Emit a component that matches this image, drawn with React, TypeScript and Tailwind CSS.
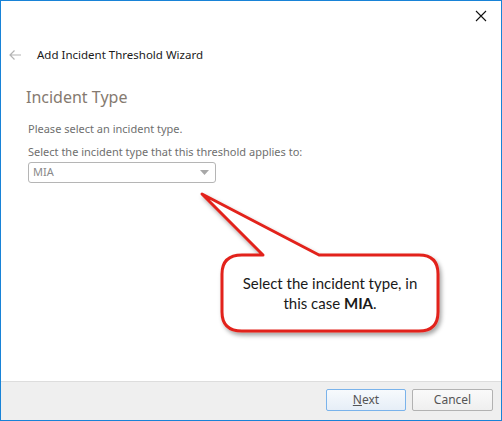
function Callout() {
  // speech bubble drawn over the dialog, pointing at the select box
  const d =
    "M241 254 L262 254 L201 193 L318 254 L418 254 Q437 254 437 273 L437 311 Q437 330 418 330 L241 330 Q221 330 221 311 L221 273 Q221 254 241 254 Z";
  return (
    <div className="absolute inset-0 pointer-events-none">
      <svg width="502" height="421" className="absolute inset-0">
        <defs>
          <filter id="sh" x="-20%" y="-20%" width="140%" height="160%">
            <feDropShadow dx="2" dy="3" stdDeviation="2" floodColor="#000" floodOpacity="0.35" />
          </filter>
        </defs>
        <path d={d} fill="#fff" stroke="#e2231a" strokeWidth="3" strokeLinejoin="round" filter="url(#sh)" />
      </svg>
      <div
        className="absolute left-[221px] top-[272px] w-[216px] text-center text-[15px] leading-[20px] text-[#1a1a1a]"
        style={{ fontFamily: "Lato, 'Open Sans', sans-serif" }}
      >
        Select the incident type, in
        <br />
        this case <b>MIA</b>.
      </div>
    </div>
  );
}

export default function App() {
  return (
    <div
      className="relative w-[502px] h-[421px] border border-[#1883d7] bg-white flex flex-col"
      style={{ fontFamily: "'Noto Sans', 'Open Sans', sans-serif" }}
    >
      {/* Title bar */}
      <div className="h-[43px] flex justify-end items-start pr-[14px] pt-[9px]">
        <svg width="12" height="12" viewBox="0 0 12 12">
          <path d="M1 1 L11 11 M11 1 L1 11" stroke="#111" strokeWidth="1.1" />
        </svg>
      </div>

      {/* Header */}
      <div className="h-[22px] flex items-center">
        <svg width="14" height="12" viewBox="0 0 14 12" className="ml-[7px]">
          <path d="M13 6 H2 M6.5 1.5 L2 6 L6.5 10.5" stroke="#b3b3b3" strokeWidth="1.2" fill="none" />
        </svg>
        <span className="ml-[15px] text-[11.5px] text-[#1a1a1a]">Add Incident Threshold Wizard</span>
      </div>

      {/* Body */}
      <div className="flex-1 pl-[25px] pt-[20px]">
        <div className="text-[16px] leading-[22px] text-[#857a70]">Incident Type</div>
        <div className="mt-[13px] text-[11px] leading-[16px] text-[#6f6f6f] pl-[2px]">Please select an incident type.</div>
        <div className="mt-[7px] text-[11px] leading-[16px] text-[#6f6f6f] pl-[2px]">
          Select the incident type that this threshold applies to:
        </div>
        <div className="mt-[2px] ml-[2px] w-[188px] h-[21px] border border-[#b5b5b5] rounded-[3px] flex items-center justify-between pl-[4px] pr-[6px]">
          <span className="text-[11px] text-[#8a8a8a]">MIA</span>
          <svg width="9" height="5" viewBox="0 0 9 5">
            <path d="M0 0 H9 L4.5 5 Z" fill="#a8a8a8" />
          </svg>
        </div>
      </div>

      {/* Footer */}
      <div className="h-[39px] border-t border-[#dddddd] bg-[#efefef] flex items-start justify-end gap-[6px] pt-[7px] pr-[8px]">
        <button className="w-[80px] h-[22px] border border-[#7ab3eb] rounded-[2px] bg-gradient-to-b from-[#f7fafd] to-[#e6eef7] text-[12px] text-[#555]">
          <span className="underline">N</span>ext
        </button>
        <button className="w-[81px] h-[22px] border border-[#b2b2b2] rounded-[2px] bg-gradient-to-b from-[#fafafa] to-[#efefef] text-[12px] text-[#555]">
          Cancel
        </button>
      </div>

      <Callout />
    </div>
  );
}
